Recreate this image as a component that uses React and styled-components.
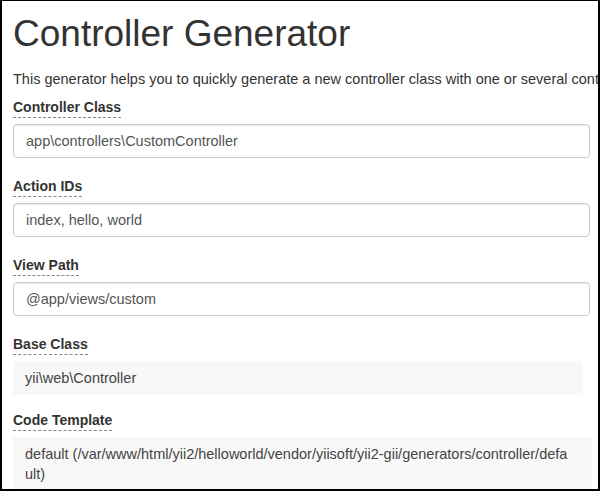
import * as React from 'react';
import styled, { createGlobalStyle } from 'styled-components';

const GlobalStyle = createGlobalStyle`
    html, body {
        margin: 0;
        padding: 0;
        background: #fff;
    }
    body {
        font-family: "Liberation Sans", Arial, sans-serif;
        font-size: 14.5px;
        line-height: 20px;
        color: #333;
    }
`;

const Frame = styled.div`
    width: 600px;
    height: 491px;
    box-sizing: border-box;
    border-top: 1px solid #000;
    border-left: 2px solid #000;
    border-right: 2px solid #000;
    border-bottom: 2px solid #000;
    padding: 13px 6px 0 11px;
    overflow: hidden;
`;

const Title = styled.h1`
    margin: 0;
    font-size: 37px;
    line-height: 39px;
    font-weight: 400;
    color: #333;
`;

const Intro = styled.p`
    margin: 16px 0 8px;
    white-space: nowrap;
    color: #333;
`;

const Group = styled.div`
    margin-bottom: ${(p) => (p.$sticky ? 15 : 18)}px;
`;

const Label = styled.label`
    display: inline-block;
    font-size: 14px;
    font-weight: bold;
    line-height: 20px;
    color: #333;
    border-bottom: 1px dashed #888;
    margin-bottom: 6px;
`;

const Input = styled.input`
    display: block;
    box-sizing: border-box;
    width: 577px;
    height: 34px;
    padding: 6px 12px;
    font-family: inherit;
    font-size: 14.5px;
    line-height: 20px;
    color: #555;
    background: #fff;
    border: 1px solid #ccc;
    border-radius: 4px;
    box-shadow: inset 0 1px 1px rgba(0, 0, 0, 0.075);
    outline: none;
`;

const StickyValue = styled.div`
    box-sizing: border-box;
    width: ${(p) => p.$width}px;
    min-height: 34px;
    padding: 7px 12px 6px;
    background: #f8f8f8;
    color: #444;
`;

const fields = [
    { label: 'Controller Class', value: 'app\\controllers\\CustomController' },
    { label: 'Action IDs', value: 'index, hello, world' },
    { label: 'View Path', value: '@app/views/custom' },
];

const App = () => (
    <>
        <GlobalStyle />
        <Frame>
            <Title>Controller Generator</Title>
            <Intro>
                This generator helps you to quickly generate a new controller class with one or several controller actions and their corresponding views.
            </Intro>
            {fields.map((f) => (
                <Group key={f.label}>
                    <Label>{f.label}</Label>
                    <Input defaultValue={f.value} />
                </Group>
            ))}
            <Group $sticky>
                <Label>Base Class</Label>
                <StickyValue $width={570}>yii\web\Controller</StickyValue>
            </Group>
            <Group $sticky>
                <Label>Code Template</Label>
                <StickyValue $width={579}>
                    default (/var/www/html/yii2/helloworld/vendor/yiisoft/yii2-gii/generators/controller/defa
                    <br />
                    ult)
                </StickyValue>
            </Group>
        </Frame>
    </>
);

export default App;
